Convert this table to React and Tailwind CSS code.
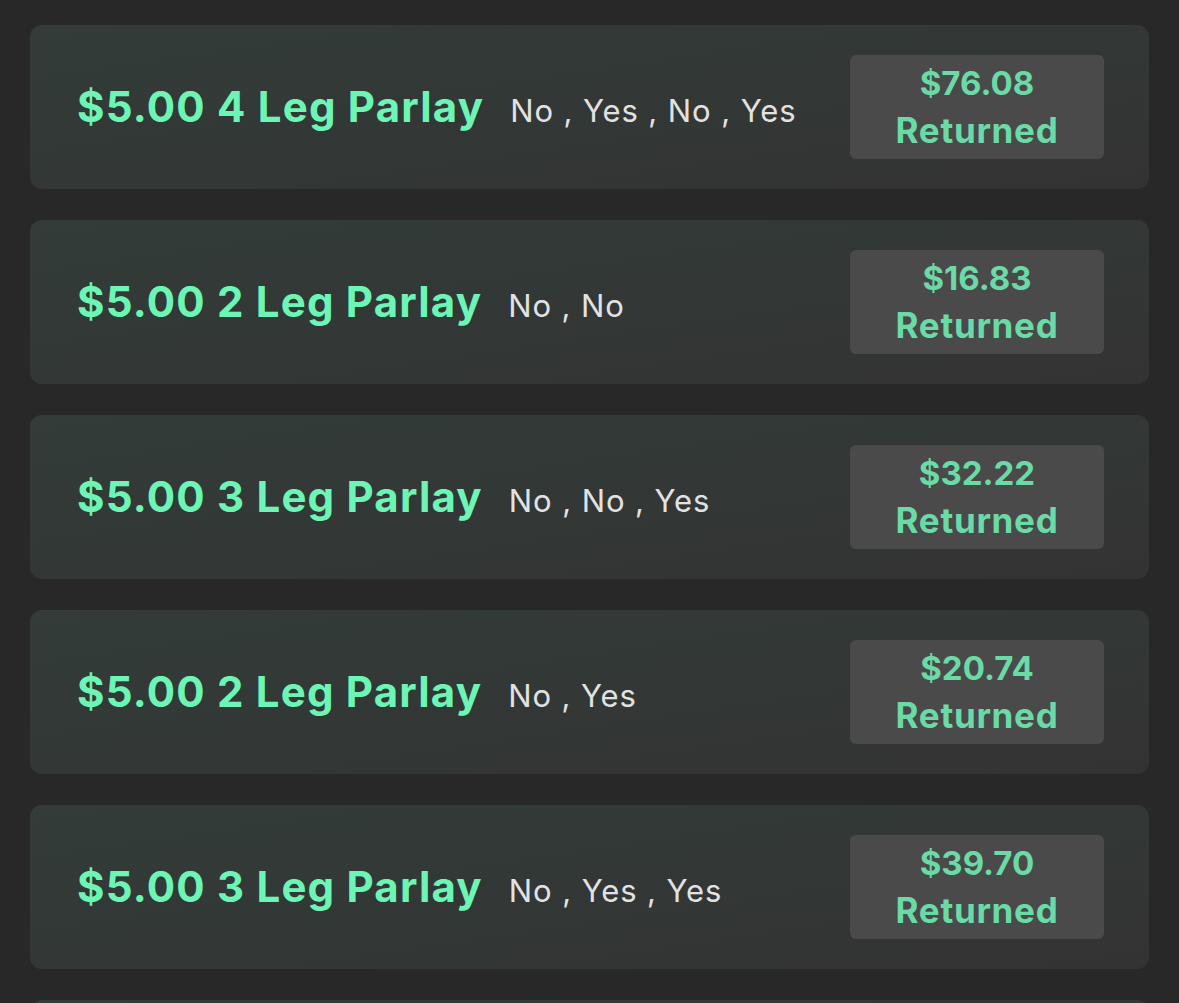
import React from "react";

const rows = [
  { legs: 4, picks: "No , Yes , No , Yes", amt: "$76.08" },
  { legs: 2, picks: "No , No", amt: "$16.83" },
  { legs: 3, picks: "No , No , Yes", amt: "$32.22" },
  { legs: 2, picks: "No , Yes", amt: "$20.74" },
  { legs: 3, picks: "No , Yes , Yes", amt: "$39.70" },
];

export default function App() {
  return (
    <div
      className="w-[1179px] h-[1003px] overflow-hidden bg-[#282828] px-[30px] pt-[25px] flex flex-col gap-[31px]"
      style={{ fontFamily: "Inter, 'Noto Sans', sans-serif" }}
    >
      {rows.map((r, i) => (
        <div
          key={i}
          className="shrink-0 h-[164px] rounded-[12px] bg-gradient-to-br from-[#323c38] to-[#333333] flex items-center pl-[47px] pr-[45px]"
        >
          <div className="text-[#6cf5b4] font-bold text-[42px] leading-none tracking-[1.2px]">
            $5.00 {r.legs} Leg Parlay
          </div>
          <div className="ml-[26px] mt-[6px] text-[#e2e2e2] text-[31px] leading-none tracking-[0.9px]">
            {r.picks}
          </div>
          <div className="ml-auto w-[254px] h-[104px] rounded-[6px] bg-[#4a4a4a] flex flex-col items-center justify-center text-[#6adaa6] font-bold leading-[47px]">
            <div className="text-[33px]">{r.amt}</div>
            <div className="text-[35px] tracking-[0.7px]">Returned</div>
          </div>
        </div>
      ))}
      <div className="shrink-0 h-[164px] rounded-[12px] bg-gradient-to-br from-[#323c38] to-[#333333]" />
    </div>
  );
}
